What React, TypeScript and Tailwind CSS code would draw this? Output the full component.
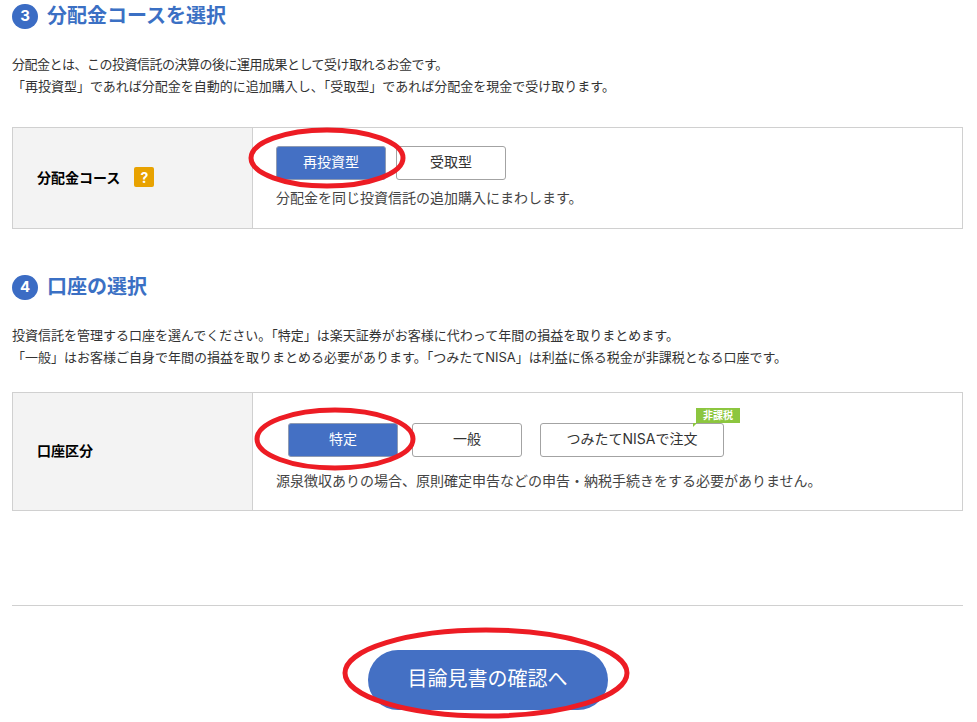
const FONT = "font-['Inter','Noto_Sans_CJK_JP',sans-serif]";

function StepHeading({ num, title }: { num: number; title: string }) {
  return (
    <div className="flex items-center gap-[9px] h-[26px]">
      <span className="w-[26px] h-[25px] rounded-full bg-[#3b6cc4] text-white text-[15px] font-bold flex items-center justify-center">
        {num}
      </span>
      <h2 className="text-[20px] leading-[26px] font-bold text-[#3b70c4]">{title}</h2>
    </div>
  );
}

function OptionButton({
  label,
  selected,
  width,
}: {
  label: string;
  selected?: boolean;
  width: string;
}) {
  return (
    <button
      className={
        selected
          ? `${width} h-[34px] pb-[3px] rounded-[3px] border border-[#8f9bb3] bg-[#4470c4] text-white text-[14px]`
          : `${width} h-[34px] pb-[3px] rounded-[3px] border border-[#a3a3a3] bg-white text-[#333] text-[14px]`
      }
    >
      {label}
    </button>
  );
}

export default function App() {
  return (
    <div className={`${FONT} relative w-[977px] h-[722px] overflow-hidden bg-white px-3 text-[#333]`}>
      <div className="w-[951px] pt-[3px]">
        <StepHeading num={3} title="分配金コースを選択" />

        <p className="mt-[24px] text-[13px] leading-[22px]">
          <span className="tracking-[-0.5px]">
            分配金とは、この投資信託の決算の後に運用成果として受け取れるお金です。
          </span>
          <br />
          「再投資型」であれば分配金を自動的に追加購入し、「受取型」であれば分配金を現金で受け取ります。
        </p>

        <div className="mt-[30px] flex h-[102px] border border-[#d0d0d0]">
          <div className="w-[240px] shrink-0 bg-[#f3f3f3] border-r border-[#d0d0d0] pl-[24px] pb-[2px] flex items-center gap-[14px]">
            <span className="text-[14px] font-bold text-black">分配金コース</span>
            <span className="w-[20px] h-[20px] rounded-[2px] bg-[#e8a200] text-white text-[14px] font-bold flex items-center justify-center">
              ?
            </span>
          </div>
          <div className="pl-[23px] pt-[18px]">
            <div className="flex gap-[10px]">
              <OptionButton label="再投資型" selected width="w-[110px]" />
              <OptionButton label="受取型" width="w-[110px]" />
            </div>
            <p className="mt-[8px] text-[14px] leading-[20px] text-[#444]">
              分配金を同じ投資信託の追加購入にまわします。
            </p>
          </div>
        </div>

        <div className="mt-[45px]">
          <StepHeading num={4} title="口座の選択" />
        </div>

        <p className="mt-[24px] text-[13px] leading-[22px]">
          投資信託を管理する口座を選んでください。「特定」は楽天証券がお客様に代わって年間の損益を取りまとめます。
          <br />
          「一般」はお客様ご自身で年間の損益を取りまとめる必要があります。「つみたてNISA」は利益に係る税金が非課税となる口座です。
        </p>

        <div className="mt-[24px] flex h-[119px] border border-[#d0d0d0]">
          <div className="w-[240px] shrink-0 bg-[#f3f3f3] border-r border-[#d0d0d0] pl-[24px] pb-[2px] flex items-center">
            <span className="text-[14px] font-bold text-black">口座区分</span>
          </div>
          <div className="pl-[23px] pt-[30px]">
            <div className="flex pl-[12px]">
              <OptionButton label="特定" selected width="w-[110px]" />
              <div className="ml-[14px]">
                <OptionButton label="一般" width="w-[110px]" />
              </div>
              <div className="relative ml-[18px]">
                <OptionButton label="つみたてNISAで注文" width="w-[184px]" />
                <span className="absolute -top-[15px] -right-[16px] w-[44px] h-[15px] bg-[#8cc63f] text-white text-[10px] leading-[15px] font-bold text-center">
                  非課税
                </span>
                <span className="absolute top-0 right-[27px] w-0 h-0 border-t-[4px] border-r-[4px] border-t-[#8cc63f] border-r-transparent" />
              </div>
            </div>
            <p className="mt-[14px] text-[14px] leading-[20px] text-[#444]">
              源泉徴収ありの場合、原則確定申告などの申告・納税手続きをする必要がありません。
            </p>
          </div>
        </div>

        <div className="mt-[94px] border-t border-[#d0d0d0]" />

        <div className="mt-[44px] flex justify-center">
          <button className="w-[240px] h-[60px] pb-[2px] rounded-[30px] bg-[#4470c4] text-white text-[20px]">
            目論見書の確認へ
          </button>
        </div>
      </div>

      {/* hand drawn red marks on top of the screenshot */}
      <svg className="absolute left-0 top-0 pointer-events-none" width="977" height="722" fill="none" stroke="#ed1c24" strokeWidth="5">
        <ellipse cx="327" cy="158" rx="76" ry="28" />
        <ellipse cx="335" cy="439" rx="78" ry="29" />
        <ellipse cx="486" cy="673" rx="141" ry="43" />
      </svg>
    </div>
  );
}
